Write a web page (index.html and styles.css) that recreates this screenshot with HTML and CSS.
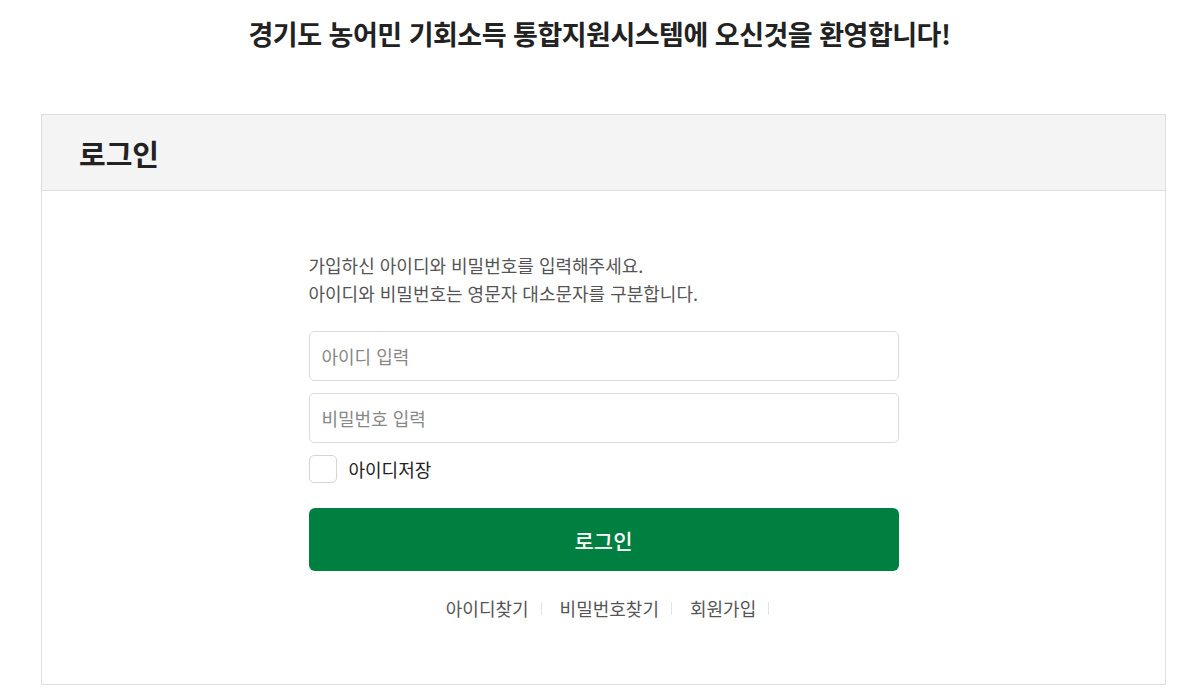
FILE: index.html
```html
<!DOCTYPE html>
<html lang="ko">

<head>
    <meta charset="UTF-8">
    <meta name="viewport" content="width=device-width, initial-scale=1.0">
    <title>로그인</title>
    <link rel="stylesheet" href="styles.css">
</head>

<body>
    <h1 class="welcome">경기도 농어민 기회소득 통합지원시스템에 오신것을 환영합니다!</h1>

    <div class="login-box">
        <div class="login-head">
            <h2>로그인</h2>
        </div>
        <div class="login-body">
            <form class="login-form">
                <p class="guide">가입하신 아이디와 비밀번호를 입력해주세요.<br>아이디와 비밀번호는 영문자 대소문자를 구분합니다.</p>
                <input type="text" class="field" placeholder="아이디 입력">
                <input type="password" class="field" placeholder="비밀번호 입력">
                <label class="save-id">
                    <input type="checkbox">
                    <span class="check-box"></span>
                    <span>아이디저장</span>
                </label>
                <button type="button" class="login-btn">로그인</button>
                <ul class="links">
                    <li><a href="#">아이디찾기</a></li>
                    <li><a href="#">비밀번호찾기</a></li>
                    <li><a href="#">회원가입</a></li>
                </ul>
            </form>
        </div>
    </div>
</body>

</html>
```

FILE: styles.css
```css
body {
    margin: 0;
    font-family: "Noto Sans CJK KR", "Noto Sans", sans-serif;
    color: #222;
    background-color: #fff;
}

.welcome {
    margin: 0;
    padding: 14px 0 0;
    height: 97px;
    box-sizing: border-box;
    text-align: center;
    font-size: 27px;
    font-weight: 700;
    letter-spacing: -0.5px;
    line-height: 40px;
    color: #222;
}

.login-box {
    width: 1125px;
    margin-left: 41px;
    margin-top: 17px;
    border: 1px solid #dedede;
    box-sizing: border-box;
}

.login-head {
    height: 76px;
    background-color: #f4f4f4;
    border-bottom: 1px solid #dedede;
    box-sizing: border-box;
    display: flex;
    align-items: center;
    padding-left: 37px;
}

.login-head h2 {
    margin: 0;
    font-size: 29px;
    font-weight: 700;
    color: #222;
}

.login-body {
    padding: 60px 0 63px;
}

.login-form {
    width: 590px;
    margin: 0 auto;
    display: flex;
    flex-direction: column;
}

.guide {
    margin: 0 0 24px;
    font-size: 18px;
    line-height: 28px;
    color: #555;
}

.field {
    height: 50px;
    border: 1px solid #dcdcdc;
    border-radius: 5px;
    padding: 0 12px;
    font-family: inherit;
    font-size: 18px;
    color: #222;
    margin-bottom: 12px;
    box-sizing: border-box;
}

.field::placeholder {
    color: #888;
}

.save-id {
    display: flex;
    align-items: center;
    gap: 12px;
    font-size: 18px;
    color: #222;
    height: 28px;
    margin-bottom: 25px;
    cursor: pointer;
}

.save-id input {
    display: none;
}

.check-box {
    width: 28px;
    height: 28px;
    border: 1px solid #d4d4d4;
    border-radius: 5px;
    box-sizing: border-box;
}

.login-btn {
    height: 63px;
    border: none;
    border-radius: 6px;
    background-color: #008040;
    color: #fff;
    font-family: inherit;
    font-size: 21px;
    font-weight: 500;
    cursor: pointer;
}

.links {
    list-style: none;
    margin: 24px 0 0;
    padding: 0 0 0 8px;
    display: flex;
    justify-content: center;
}

.links li {
    display: flex;
    align-items: center;
}

.links li::after {
    content: "";
    width: 1px;
    height: 13px;
    background-color: #e4e4e4;
    margin: 0 18px 0 12px;
}

.links li:last-child::after {
    margin-right: 0;
}

.links a {
    font-size: 18px;
    line-height: 26px;
    color: #555;
    text-decoration: none;
}
```
